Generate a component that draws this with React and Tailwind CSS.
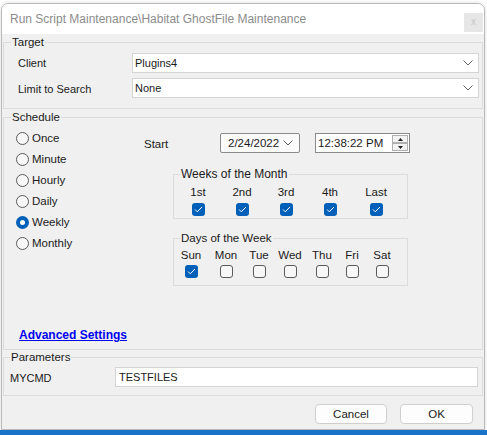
import React from "react";

const Chevron = ({ className = "" }) => (
  <svg width="10" height="6" viewBox="0 0 10 6" className={className}>
    <path d="M0.5 0.5 L5 5 L9.5 0.5" fill="none" stroke="#606060" strokeWidth="1" />
  </svg>
);

const Check = ({ on }) =>
  on ? (
    <span className="flex h-[13px] w-[13px] items-center justify-center rounded-[3px] bg-[#005fb8]">
      <svg width="9" height="7" viewBox="0 0 9 7">
        <path d="M1 3.5 L3.3 5.8 L8 1" fill="none" stroke="#ffffff" strokeWidth="1" />
      </svg>
    </span>
  ) : (
    <span className="h-[13px] w-[13px] rounded-[3px] border border-[#5a5a5a] bg-[#f7f7f7]" />
  );

const Radio = ({ on, label }) => (
  <div className="flex h-[21px] items-center">
    {on ? (
      <span className="flex h-[13px] w-[13px] items-center justify-center rounded-full bg-[#005fb8]">
        <span className="h-[5px] w-[5px] rounded-full bg-white" />
      </span>
    ) : (
      <span className="h-[13px] w-[13px] rounded-full border border-[#5a5a5a] bg-[#f7f7f7]" />
    )}
    <span className="ml-[3px] text-[11.5px]">{label}</span>
  </div>
);

const Select = ({ value }) => (
  <div className="flex h-[20px] w-[347px] items-center justify-between border border-[#d4d4d4] bg-white pl-[2px] pr-[5px]">
    <span>{value}</span>
    <Chevron />
  </div>
);

const weeks = [
  { label: "1st", w: "w-[44px]" },
  { label: "2nd", w: "w-[44px]" },
  { label: "3rd", w: "w-[44px]" },
  { label: "4th", w: "w-[44px]" },
  { label: "Last", w: "w-[48px]" },
];

const days = [
  { label: "Sun", w: "w-[34px]", on: true },
  { label: "Mon", w: "w-[36px]" },
  { label: "Tue", w: "w-[30px]" },
  { label: "Wed", w: "w-[32px]" },
  { label: "Thu", w: "w-[32px]" },
  { label: "Fri", w: "w-[28px]" },
  { label: "Sat", w: "w-[32px]" },
];

export default function App() {
  return (
    <div className="flex h-[435px] w-[487px] flex-col overflow-hidden bg-white font-['Liberation_Sans',Arial,sans-serif] text-[11px] text-[#1a1a1a]">
      <div className="ml-[1px] mt-[3px] flex w-[484px] flex-col rounded-t-[7px] border border-[#b9b9b9] shadow-[0_0_4px_rgba(0,0,0,0.15)]">
        {/* title bar */}
        <div className="flex h-[30px] items-center justify-between rounded-t-[7px] bg-white pl-[8px] pr-[1px]">
          <span className="text-[12px] text-[#8c8c8c]">Run Script Maintenance\Habitat GhostFile Maintenance</span>
          <div className="mt-[6px] flex h-[19px] w-[19px] items-center justify-center bg-[#e6e6e6] text-[10px] leading-none text-[#c8c8c8]">
            x
          </div>
        </div>

        <div className="flex h-[395px] flex-col bg-[#f0f0f0] px-[1px]">
          {/* Target */}
          <fieldset className="border border-[#dcdcdc] pb-[10px]">
            <legend className="ml-[7px] px-[1px] text-[11.5px] leading-[16px]">Target</legend>
            <div className="mt-[3px] flex flex-col gap-[5px]">
              <div className="flex items-center">
                <span className="w-[128px] pl-[14px]">Client</span>
                <Select value="Plugins4" />
              </div>
              <div className="flex items-center">
                <span className="w-[128px] pl-[14px] pt-[3px]">Limit to Search</span>
                <Select value="None" />
              </div>
            </div>
          </fieldset>

          {/* Schedule */}
          <fieldset className="border border-[#dcdcdc] pb-[6px]">
            <legend className="ml-[7px] px-[1px] text-[11.5px] leading-[16px]">Schedule</legend>
            <div className="flex">
              <div className="flex w-[140px] flex-col pl-[12px] pt-[3px]">
                <Radio label="Once" />
                <Radio label="Minute" />
                <Radio label="Hourly" />
                <Radio label="Daily" />
                <Radio label="Weekly" on />
                <Radio label="Monthly" />
              </div>

              <div className="flex flex-col pt-[8px]">
                <div className="flex items-center">
                  <span className="w-[76px] pt-[3px] text-[11.5px]">Start</span>
                  <div className="flex h-[20px] w-[80px] items-center justify-between rounded-[2px] border border-[#8a8a8a] bg-[#fbfbfb] pl-[7px] pr-[6px] text-[11.5px]">
                    <span>2/24/2022</span>
                    <Chevron />
                  </div>
                  <div className="ml-[15px] flex h-[20px] w-[95px] items-center justify-between border border-[#8a8a8a] bg-white pl-[2px] pr-[1px] text-[11.5px]">
                    <span>12:38:22 PM</span>
                    <div className="flex h-[16px] w-[16px] flex-col justify-between">
                      <div className="flex h-[8px] items-center justify-center border border-[#b0b0b0] bg-[#f3f3f3]">
                        <svg width="5" height="3" viewBox="0 0 5 3"><path d="M0 3 L2.5 0 L5 3 Z" fill="#222" /></svg>
                      </div>
                      <div className="flex h-[8px] items-center justify-center border border-[#b0b0b0] bg-[#f3f3f3]">
                        <svg width="5" height="3" viewBox="0 0 5 3"><path d="M0 0 L2.5 3 L5 0 Z" fill="#222" /></svg>
                      </div>
                    </div>
                  </div>
                </div>

                {/* Weeks of the Month */}
                <fieldset className="ml-[29px] mt-[13px] w-[235px] border border-[#dcdcdc] pb-[2px]">
                  <legend className="ml-[6px] px-[1px] text-[12px] leading-[16px]">Weeks of the Month</legend>
                  <div className="mt-[1px] flex pl-[2px]">
                    {weeks.map((wk) => (
                      <div key={wk.label} className={`flex flex-col items-center ${wk.w}`}>
                        <span className="text-[11.5px] leading-[18px]">{wk.label}</span>
                        <span className="mt-[2px]">
                          <Check on />
                        </span>
                      </div>
                    ))}
                  </div>
                </fieldset>

                {/* Days of the Week */}
                <fieldset className="ml-[29px] mt-[11px] w-[235px] border border-[#dcdcdc] pb-[7px]">
                  <legend className="ml-[6px] px-[1px] text-[11.5px] leading-[16px]">Days of the Week</legend>
                  <div className="flex">
                    {days.map((d) => (
                      <div key={d.label} className={`flex flex-col items-center ${d.w}`}>
                        <span className="text-[11.5px] leading-[18px]">{d.label}</span>
                        <span className="mt-[1px] flex">
                          <Check on={d.on} />
                        </span>
                      </div>
                    ))}
                  </div>
                </fieldset>
              </div>
            </div>

            <div className="mt-[41px] pl-[15px] leading-[16px]">
              <span className="text-[12px] font-bold text-[#0000ee] underline">Advanced Settings</span>
            </div>
          </fieldset>

          {/* Parameters */}
          <fieldset className="border border-[#dcdcdc] pb-[8px]">
            <legend className="ml-[6px] px-[1px] text-[11.5px] leading-[14px]">Parameters</legend>
            <div className="mt-[3px] flex items-center">
              <span className="w-[111px] pl-[6px] pt-[2px]">MYCMD</span>
              <div className="flex h-[20px] w-[363px] items-center border border-[#d4d4d4] bg-white pl-[3px]">
                TESTFILES
              </div>
            </div>
          </fieldset>

          {/* footer */}
          <div className="mt-[8px] flex justify-end gap-[13px] pr-[10px]">
            <button className="h-[20px] w-[72px] rounded-[4px] border border-[#cfcfcf] bg-[#fdfdfd] text-[11.5px]">Cancel</button>
            <button className="h-[20px] w-[73px] rounded-[4px] border border-[#cfcfcf] bg-[#fdfdfd] text-[11.5px]">OK</button>
          </div>
        </div>
      </div>
      <div className="mt-auto h-[5px] bg-[#1a73c9]" />
    </div>
  );
}
